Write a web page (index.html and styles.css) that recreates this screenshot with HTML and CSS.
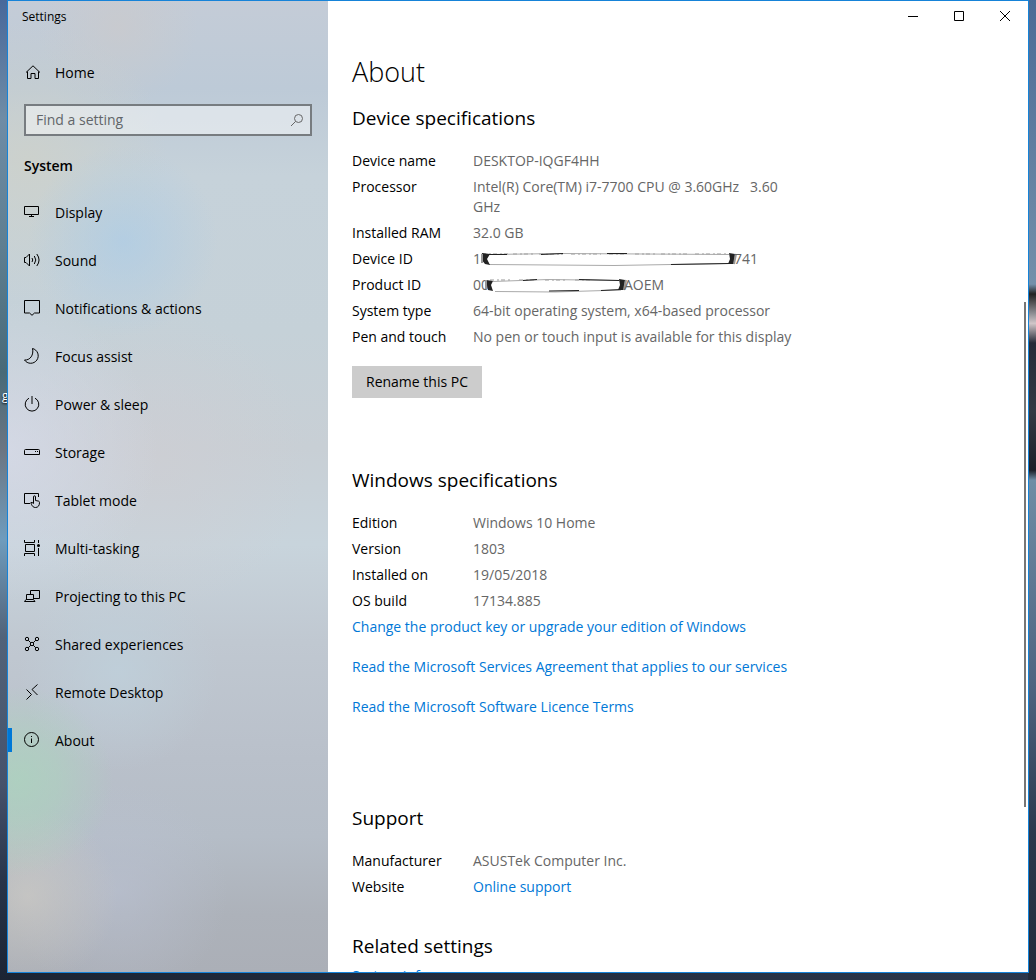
FILE: index.html
```
<!DOCTYPE html>
<html lang="en">
<head>
<meta charset="utf-8">
<meta name="viewport" content="width=device-width, initial-scale=1.0">
<title>Settings</title>
<link rel="stylesheet" href="styles.css">
</head>
<body>
<span class="desktop-label">g</span>
<div class="window">
  <aside class="sidebar">
    <div class="title">Settings</div>
    <a class="nav-item home" href="#home">
      <svg class="icon" viewBox="0 0 16 16"><path d="M2 8.500 9 1.800 16 8.500M3.500 7.500v7h3.500v-5h4v5h3.500v-7"/></svg>
      <span>Home</span>
    </a>
    <div class="search">
      <input type="text" id="search" placeholder="Find a setting" aria-label="Find a setting">
      <svg class="icon" viewBox="0 0 16 16"><circle cx="10.500" cy="6.500" r="4"/><path d="M7.500 9.500 3 14"/></svg>
    </div>
    <h3>System</h3>
    <nav>
      <a class="nav-item" href="#display">
        <svg class="icon" viewBox="0 0 16 16"><path d="M.5 2.500h14v8H.5zM7.500 10.500v2M5 12.500h5"/></svg>
        <span>Display</span>
      </a>
      <a class="nav-item" href="#sound">
        <svg class="icon" viewBox="0 0 16 16"><path d="M.5 5.500H2l3.500-3.500v12L2 10.500H.5zM8 6q1.500 2 0 4M10.300 4q3 4 0 8M12.800 2q4.500 6 0 12"/></svg>
        <span>Sound</span>
      </a>
      <a class="nav-item" href="#notifications">
        <svg class="icon" viewBox="0 0 16 16"><path d="M.5.5h15v12.500h-5L8 15.300 5.500 13h-5z"/></svg>
        <span>Notifications &amp; actions</span>
      </a>
      <a class="nav-item" href="#focus">
        <svg class="icon" viewBox="0 0 16 16"><path d="M8.500.5a7.500 7.500 0 1 1-8 11.500C6 12.500 10 7 8.500.5z"/></svg>
        <span>Focus assist</span>
      </a>
      <a class="nav-item" href="#power">
        <svg class="icon" viewBox="0 0 16 16"><path d="M8 0v8M5 2.200a6.800 6.800 0 1 0 6 0"/></svg>
        <span>Power &amp; sleep</span>
      </a>
      <a class="nav-item" href="#storage">
        <svg class="icon" viewBox="0 0 16 16"><path d="M1.500 5.500h13q1 0 1 1v4h-15v-4q0-1 1-1zM11 7.500h1M13 7.500h1"/></svg>
        <span>Storage</span>
      </a>
      <a class="nav-item" href="#tablet">
        <svg class="icon" viewBox="0 0 16 16"><path d="M6 11.500H.5v-10h14V5M9.500 10V5q0-1.200 1-1.200t1 1.200v3.500l3 .6q1 .3 1 1.500c0 3-1.500 4.900-4 4.900-2 0-3-1-4-3L6.800 10.700q1-1 2.700.8z"/></svg>
        <span>Tablet mode</span>
      </a>
      <a class="nav-item" href="#multitasking">
        <svg class="icon" viewBox="0 0 16 16"><path d="M.5 0v2.500h10V0M1.500 4.500h9v7h-9zM.5 16v-2.500h10V16M14.500 0v3M14.500 8v8"/><circle class="dot" cx="14.500" cy="5.500" r="1.500"/></svg>
        <span>Multi-tasking</span>
      </a>
      <a class="nav-item" href="#projecting">
        <svg class="icon" viewBox="0 0 16 16"><path d="M6.500 6V2.500h9v8H10M2.500 11V6.500h7V11M.5 13.500 2 11.500h7.500l1.500 2z"/></svg>
        <span>Projecting to this PC</span>
      </a>
      <a class="nav-item" href="#shared">
        <svg class="icon" viewBox="0 0 16 16"><circle cx="3" cy="3" r="1.700"/><circle cx="13" cy="3" r="1.700"/><circle cx="3" cy="13" r="1.700"/><circle cx="13" cy="13" r="1.700"/><circle cx="8" cy="8" r="1.700"/><path d="m4.200 4.200 2.600 2.600M11.800 4.200 9.200 6.800M4.200 11.800l2.600-2.600M11.800 11.800 9.200 9.200"/></svg>
        <span>Shared experiences</span>
      </a>
      <a class="nav-item" href="#remote">
        <svg class="icon" viewBox="0 0 16 16"><path d="m2.500 5.500 5 5-5 5M13.500.5l-5.500 5 5.500 5.500"/></svg>
        <span>Remote Desktop</span>
      </a>
      <a class="nav-item active" href="#about">
        <svg class="icon" viewBox="0 0 16 16"><circle cx="7.500" cy="7.500" r="7"/><path d="M7.500 6.500V11M7.500 4v1"/></svg>
        <span>About</span>
      </a>
    </nav>
  </aside>

  <main class="content">
    <div class="window-buttons">
      <button aria-label="Minimise"><svg viewBox="0 0 10 10"><path d="M0 5.500h10"/></svg></button>
      <button aria-label="Maximise"><svg viewBox="0 0 10 10"><path d="M.5.5h9v9h-9z"/></svg></button>
      <button aria-label="Close"><svg viewBox="0 0 10 10"><path d="m0 0 10 10M10 0 0 10"/></svg></button>
    </div>
    <h1>About</h1>

    <section>
      <h2>Device specifications</h2>
      <dl>
        <dt>Device name</dt><dd>DESKTOP-IQGF4HH</dd>
        <dt>Processor</dt><dd>Intel(R) Core(TM) i7-7700 CPU @ 3.60GHz &nbsp; 3.60 GHz</dd>
        <dt>Installed RAM</dt><dd>32.0 GB</dd>
        <dt>Device ID</dt>
        <dd class="masked">1<svg class="mask-long" viewBox="0 0 256 20">
          <path class="scrap" d="M1 5h26M32 5h20M58 5h24M90 5h30M128 5h18M154 5h20M180 5h28M214 5h32"/>
          <path class="faint" d="M8 5.500 80 4.500l168 1M8 15.500l125 1 115-2"/>
          <path d="M8 5.500h18M60 5.500l22-1M126 4.500h20M190 15.500l58-1"/>
          <path class="smear" d="m1 4 8 1-3 5 3 6-5-1-4-5zM248 4l6 1-1 10-6 0 2-5z"/>
          <path class="edge" d="M1 5v9M255 5l-2 10"/>
        </svg>741</dd>
        <dt>Product ID</dt>
        <dd class="masked">00<svg class="mask-short" viewBox="0 0 138 20">
          <path class="scrap" d="M1 5h20M30 5h18M56 5h22M86 5h18"/>
          <path class="faint" d="m4 6.500 55-2 72 1M6 16.500l60 .5 66-2"/>
          <path d="M34 5.500l14-1M90 4.500l40 1M60 16l30-.5M112 15.500l20-1"/>
          <path class="smear" d="m-3 5 7 1-2 4 2 6-5-1zM130 4l6 1-1 10-6 0 2-5z"/>
          <path class="edge" d="M-3 5v9M137 5l-2 10"/>
        </svg>AOEM</dd>
        <dt>System type</dt><dd>64-bit operating system, x64-based processor</dd>
        <dt>Pen and touch</dt><dd>No pen or touch input is available for this display</dd>
      </dl>
      <button class="rename">Rename this PC</button>
    </section>

    <section>
      <h2>Windows specifications</h2>
      <dl>
        <dt>Edition</dt><dd>Windows 10 Home</dd>
        <dt>Version</dt><dd>1803</dd>
        <dt>Installed on</dt><dd>19/05/2018</dd>
        <dt>OS build</dt><dd>17134.885</dd>
      </dl>
      <div class="links">
        <a href="#product-key">Change the product key or upgrade your edition of Windows</a>
        <a href="#services">Read the Microsoft Services Agreement that applies to our services</a>
        <a href="#licence">Read the Microsoft Software Licence Terms</a>
      </div>
    </section>

    <section class="support">
      <h2>Support</h2>
      <dl>
        <dt>Manufacturer</dt><dd>ASUSTek Computer Inc.</dd>
        <dt>Website</dt><dd><a href="#support">Online support</a></dd>
      </dl>
    </section>

    <section class="related">
      <h2>Related settings</h2>
      <a href="#info">System info</a>
    </section>
    <div class="scroll-thumb"></div>
  </main>
</div>
</body>
</html>
```
FILE: styles.css
```
:root {
  --accent: #0078d7;
  --text: #000;
  --muted: #666;
}
* {
  box-sizing: border-box;
}
body {
  margin: 0;
  height: 100vh;
  padding: 0 7px 7px;
  overflow: hidden;
  color: var(--text);
  font: 14px/20px "Open Sans", "Noto Sans", sans-serif;
  /* desktop wallpaper showing round the window */
  background:
    linear-gradient(#4b6b96 0, #7490aa 29%, #222 30%, #8f8f94 32%, #d0c6c8 33%, #252b38 35%, #343a44 42%, #1c2029 48%, #6f8da5 49%, #4e6480 70%, #2b394d 85%, #222b3a 100%) right / 8px 100% no-repeat,
    linear-gradient(#48689a 0, #6f8ca6 12%, #5f7f91 25%, #486a78 38%, #6c7682 46%, #6f9cbd 55%, #526379 65%, #46526b 80%, #283449 90%, #1b2433 100%) left / 8px 100% no-repeat,
    linear-gradient(90deg, #1b2433, #2b374c);
}
a {
  color: var(--accent);
  text-decoration: none;
}
.desktop-label {
  position: absolute;
  top: 386px;
  left: 2px;
  color: #fff;
  font-size: 12px;
  text-shadow: 0 1px 2px #000;
}
.window {
  position: relative;
  display: flex;
  height: 100%;
  border: 1px solid #1683d8;
  background: #fff;
  overflow: hidden;
}

/* sidebar */
.sidebar {
  width: 320px;
  flex-shrink: 0;
  background:
    radial-gradient(circle at 10px 780px, rgba(170, 214, 188, 0.7) 0, rgba(170, 214, 188, 0.5) 40px, transparent 95px),
    radial-gradient(circle at 20px 895px, rgba(205, 202, 196, 0.7) 0, transparent 90px),
    radial-gradient(circle at 110px 890px, rgba(186, 193, 210, 0.6) 0, transparent 110px),
    radial-gradient(circle at 115px 240px, rgba(172, 204, 230, 0.7) 0, transparent 95px),
    radial-gradient(circle at 110px 25px, rgba(204, 202, 202, 0.6) 0, transparent 80px),
    radial-gradient(circle at 0 450px, rgba(214, 218, 232, 0.8) 0, transparent 150px),
    radial-gradient(circle at 20px 160px, rgba(205, 209, 203, 0.9) 0, transparent 140px),
    radial-gradient(circle at 150px 460px, rgba(206, 206, 211, 0.7) 0, transparent 150px),
    radial-gradient(circle at 110px 670px, rgba(191, 208, 219, 0.8) 0, transparent 100px),
    linear-gradient(#c4ccd7 0, #bdcad7 9%, #c6d2da 18%, #c5d1d8 34%, #c8cfd5 46%, #c8d4dc 56%, #c0c8d1 66%, #b9c0ca 78%, #b5bdc7 86%, #adb2ba 94%, #abafb7 100%);
}
.title {
  padding: 6px 14px;
  font-size: 12px;
}
.sidebar h3 {
  margin: 0;
  padding: 20px 16px 12px;
  font-size: 14px;
  font-weight: 600;
}
.nav-item {
  display: flex;
  align-items: center;
  gap: 15px;
  height: 48px;
  padding-left: 16px;
  color: var(--text);
}
.nav-item span {
  padding-top: 2px;
}
.home {
  height: 40px;
  margin: 19px 0 12px;
}
.nav-item.active {
  background: linear-gradient(var(--accent), var(--accent)) left / 4px 24px no-repeat;
}
.icon {
  width: 16px;
  height: 16px;
  flex-shrink: 0;
  overflow: visible;
  fill: none;
  stroke: #000;
}
.icon .dot {
  fill: #000;
  stroke: none;
}
.search {
  display: flex;
  align-items: center;
  height: 32px;
  margin: 0 16px;
  padding: 0 6px 0 10px;
  border: 2px solid #777c80;
  background: rgba(255, 255, 255, 0.45);
}
.search input {
  flex: 1;
  min-width: 0;
  padding: 0;
  border: 0;
  outline: 0;
  background: none;
  font: inherit;
}
.search input::placeholder {
  color: #62666a;
  opacity: 1;
}
.search .icon {
  stroke: #666;
}

/* content */
.content {
  flex: 1;
  min-width: 0;
  padding-left: 24px;
  overflow: hidden;
}
.window-buttons {
  display: flex;
  justify-content: flex-end;
}
.window-buttons button {
  display: grid;
  place-items: center;
  width: 46px;
  height: 30px;
  padding: 0;
  border: 0;
  background: none;
}
.window-buttons svg {
  width: 10px;
  height: 10px;
  fill: none;
  stroke: #000;
}
h1 {
  margin: 23px 0 14px;
  font-size: 27px;
  line-height: 36px;
  font-weight: 300;
}
h2 {
  margin: 0 0 19px;
  font-size: 19px;
  line-height: 28px;
  font-weight: 400;
}
section {
  margin-bottom: 68px;
}
dl {
  display: grid;
  grid-template-columns: 121px minmax(0, 330px);
  row-gap: 6px;
  margin: 0;
}
dd {
  margin: 0;
  color: var(--muted);
}

/* ids painted over by hand */
.masked {
  display: flex;
}
.masked svg {
  height: 20px;
  margin-right: -3px;
  overflow: visible;
  fill: none;
  stroke: #222;
}
.mask-long {
  width: 256px;
}
.mask-short {
  width: 138px;
}
.masked .scrap {
  stroke: #999;
  stroke-dasharray: 4 3 2 2;
}
.masked .faint {
  stroke: #aaa;
}
.masked .smear {
  fill: #222;
  stroke: none;
}
.masked .edge {
  stroke: #999;
  stroke-width: 2;
}
.rename {
  margin-top: 19px;
  height: 32px;
  padding: 0 14px;
  border: 0;
  background: #ccc;
  font: inherit;
}
.links {
  display: flex;
  flex-direction: column;
  align-items: flex-start;
  gap: 20px;
  margin-top: 6px;
}
.support {
  margin: 87px 0 35px;
}
.related h2 {
  margin-bottom: 6px;
}
.scroll-thumb {
  position: absolute;
  top: 31%;
  right: 2px;
  width: 2px;
  height: 52%;
  background: #767676;
}
```
